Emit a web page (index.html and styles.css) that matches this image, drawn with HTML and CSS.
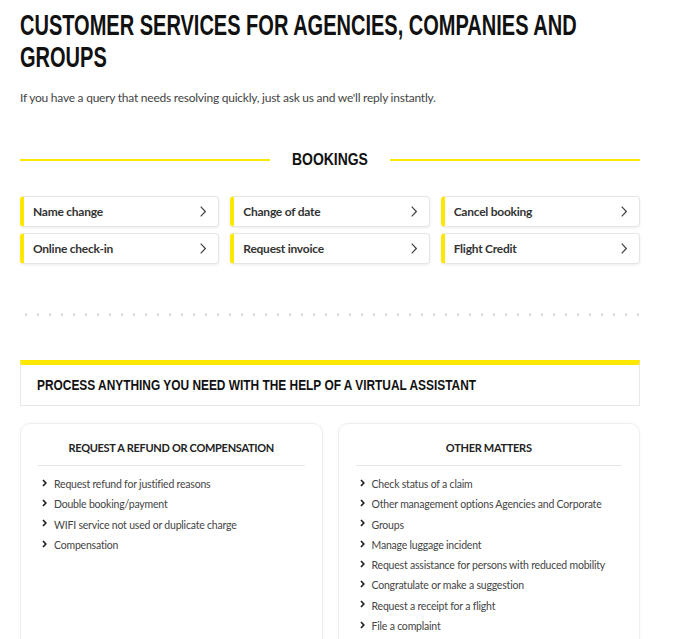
FILE: index.html
```html
<!DOCTYPE html>
<html lang="en">
<head>
  <meta charset="UTF-8" />
  <meta name="viewport" content="width=device-width, initial-scale=1.0" />
  <title>Customer services for agencies, companies and groups</title>
  <link rel="stylesheet" href="styles.css">
</head>
<body>
  <main class="page">
    <h1 class="title">CUSTOMER SERVICES FOR AGENCIES, COMPANIES AND GROUPS</h1>
    <p class="intro">If you have a query that needs resolving quickly, just ask us and we'll reply instantly.</p>

    <section class="bookings">
      <h2 class="divider"><span>BOOKINGS</span></h2>
      <div class="options">
        <a class="option" href="#"><span>Name change</span><svg class="arrow" viewBox="0 0 6 11"><polyline points="0.7,0.7 5.3,5.5 0.7,10.3" /></svg></a>
        <a class="option" href="#"><span>Change of date</span><svg class="arrow" viewBox="0 0 6 11"><polyline points="0.7,0.7 5.3,5.5 0.7,10.3" /></svg></a>
        <a class="option" href="#"><span>Cancel booking</span><svg class="arrow" viewBox="0 0 6 11"><polyline points="0.7,0.7 5.3,5.5 0.7,10.3" /></svg></a>
        <a class="option" href="#"><span>Online check-in</span><svg class="arrow" viewBox="0 0 6 11"><polyline points="0.7,0.7 5.3,5.5 0.7,10.3" /></svg></a>
        <a class="option" href="#"><span>Request invoice</span><svg class="arrow" viewBox="0 0 6 11"><polyline points="0.7,0.7 5.3,5.5 0.7,10.3" /></svg></a>
        <a class="option" href="#"><span>Flight Credit</span><svg class="arrow" viewBox="0 0 6 11"><polyline points="0.7,0.7 5.3,5.5 0.7,10.3" /></svg></a>
      </div>
    </section>

    <div class="dots"></div>

    <section class="assistant">
      <h3>PROCESS ANYTHING YOU NEED WITH THE HELP OF A VIRTUAL ASSISTANT</h3>
    </section>

    <div class="cards">
      <div class="card">
        <h4>REQUEST A REFUND OR COMPENSATION</h4>
        <ul class="links">
          <li><svg class="tick" viewBox="0 0 5 8"><polyline points="1,1 3.8,4 1,7" /></svg>Request refund for justified reasons</li>
          <li><svg class="tick" viewBox="0 0 5 8"><polyline points="1,1 3.8,4 1,7" /></svg>Double booking/payment</li>
          <li><svg class="tick" viewBox="0 0 5 8"><polyline points="1,1 3.8,4 1,7" /></svg>WIFI service not used or duplicate charge</li>
          <li><svg class="tick" viewBox="0 0 5 8"><polyline points="1,1 3.8,4 1,7" /></svg>Compensation</li>
        </ul>
      </div>
      <div class="card">
        <h4>OTHER MATTERS</h4>
        <ul class="links">
          <li><svg class="tick" viewBox="0 0 5 8"><polyline points="1,1 3.8,4 1,7" /></svg>Check status of a claim</li>
          <li><svg class="tick" viewBox="0 0 5 8"><polyline points="1,1 3.8,4 1,7" /></svg>Other management options Agencies and Corporate</li>
          <li><svg class="tick" viewBox="0 0 5 8"><polyline points="1,1 3.8,4 1,7" /></svg>Groups</li>
          <li><svg class="tick" viewBox="0 0 5 8"><polyline points="1,1 3.8,4 1,7" /></svg>Manage luggage incident</li>
          <li><svg class="tick" viewBox="0 0 5 8"><polyline points="1,1 3.8,4 1,7" /></svg>Request assistance for persons with reduced mobility</li>
          <li><svg class="tick" viewBox="0 0 5 8"><polyline points="1,1 3.8,4 1,7" /></svg>Congratulate or make a suggestion</li>
          <li><svg class="tick" viewBox="0 0 5 8"><polyline points="1,1 3.8,4 1,7" /></svg>Request a receipt for a flight</li>
          <li><svg class="tick" viewBox="0 0 5 8"><polyline points="1,1 3.8,4 1,7" /></svg>File a complaint</li>
        </ul>
      </div>
    </div>
  </main>
</body>
</html>
```

FILE: styles.css
```css
* {
  margin: 0;
  padding: 0;
  box-sizing: border-box;
}
body {
  font-family: Lato, 'Liberation Sans', sans-serif;
  background: #fff;
  color: #333;
}
.page {
  width: 620px;
  margin-left: 20px;
  padding-top: 9px;
  padding-bottom: 40px;
}
/* condensed headings: no narrow face installed, so squeeze the bold sans */
.title {
  font-family: 'Liberation Sans', sans-serif;
  font-weight: bold;
  font-size: 29px;
  line-height: 32px;
  color: #111;
  width: 902px;
  transform: scaleX(0.69);
  transform-origin: left top;
}
.intro {
  margin-top: 17px;
  font-size: 12px;
  line-height: 16px;
  letter-spacing: -0.24px;
  color: #444;
}
.divider {
  margin-top: 44px;
  display: flex;
  align-items: center;
  gap: 22px;
  font-family: 'Liberation Sans', sans-serif;
  font-size: 17px;
  line-height: 20px;
  color: #111;
}
.divider span {
  width: 76px;
  white-space: nowrap;
  transform: scaleX(0.82);
  transform-origin: left center;
}
.divider::before,
.divider::after {
  content: "";
  flex: 1;
  height: 2px;
  background: #ffe800;
}
.options {
  margin-top: 26px;
  display: grid;
  grid-template-columns: 1fr 1fr 1fr;
  gap: 6px 11px;
}
.option {
  height: 31px;
  display: flex;
  align-items: center;
  justify-content: space-between;
  padding: 0 12px 0 9px;
  background: #fff;
  border: 1px solid #e6e6e6;
  border-left: 4px solid #ffe800;
  border-radius: 4px;
  box-shadow: 0 1px 3px rgba(0,0,0,0.08);
  text-decoration: none;
  color: #333;
  font-weight: bold;
  font-size: 12px;
  letter-spacing: -0.25px;
}
.arrow {
  width: 6px;
  height: 11px;
  fill: none;
  stroke: #444;
  stroke-width: 1.2;
}
.dots {
  margin-top: 49px;
  height: 3px;
  background-image: radial-gradient(circle, #ddd 1.2px, transparent 1.4px);
  background-size: 12px 3px;
  background-position: 0 0;
}
.assistant {
  margin-top: 44px;
  border: 1px solid #e8e8e8;
  border-top: 5px solid #ffe800;
  padding: 10px 16px 10px;
}
.assistant h3 {
  font-family: 'Liberation Sans', sans-serif;
  font-weight: bold;
  font-size: 14px;
  line-height: 20px;
  color: #111;
  white-space: nowrap;
  transform: scaleX(0.85);
  transform-origin: left center;
}
.cards {
  margin-top: 17px;
  display: grid;
  grid-template-columns: 1fr 1fr;
  gap: 15px;
}
.card {
  border: 1px solid #efefef;
  border-radius: 10px;
  box-shadow: 0 0 4px rgba(0,0,0,0.03);
  padding: 15px 17px 40px;
}
.card h4 {
  text-align: center;
  font-size: 11px;
  line-height: 18px;
  font-weight: bold;
  letter-spacing: -0.3px;
  color: #222;
  padding-bottom: 8px;
  border-bottom: 1px solid #e6e6e6;
}
.links {
  list-style: none;
  margin-top: 8px;
  padding-left: 4px;
}
.links li {
  display: flex;
  align-items: center;
  line-height: 20.3px;
  font-size: 10.5px;
  letter-spacing: -0.2px;
  color: #444;
}
.tick {
  width: 5px;
  height: 8px;
  margin-right: 7px;
  margin-top: -3px;
  fill: none;
  stroke: #222;
  stroke-width: 1.7;
}
```
